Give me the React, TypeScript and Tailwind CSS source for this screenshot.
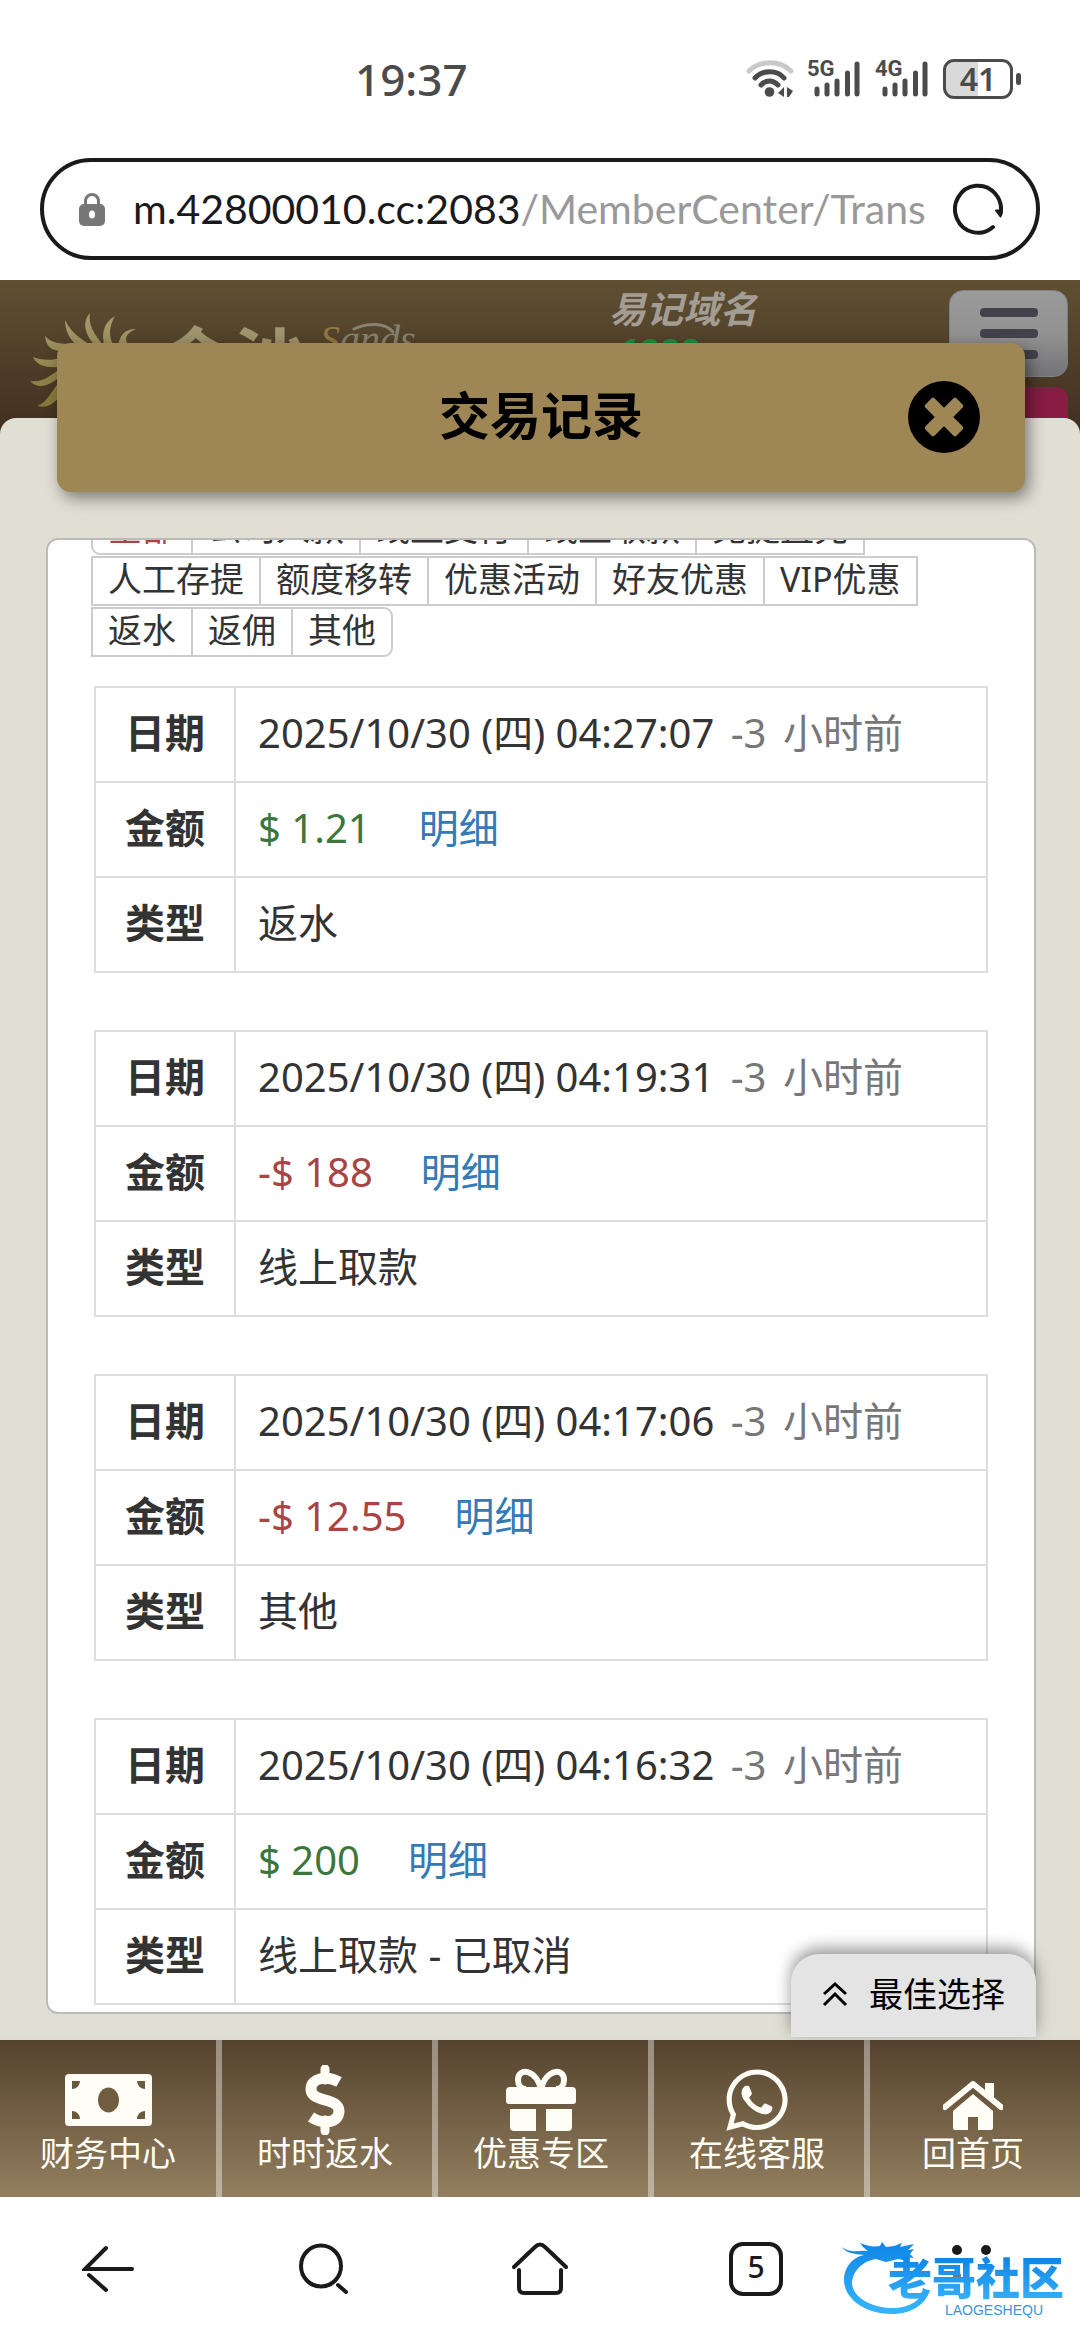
import React from "react";
import { FaWhatsapp } from "react-icons/fa";

type Entry = { time: string; amount: string; income: boolean; kind: string };

const filters = [
  "全部", "公司入款", "线上支付", "线上取款", "免提直充",
  "人工存提", "额度移转", "优惠活动", "好友优惠", "VIP优惠",
  "返水", "返佣", "其他",
];

const entries: Entry[] = [
  { time: "2025/10/30 (四) 04:27:07", amount: "$ 1.21", income: true, kind: "返水" },
  { time: "2025/10/30 (四) 04:19:31", amount: "-$ 188", income: false, kind: "线上取款" },
  { time: "2025/10/30 (四) 04:17:06", amount: "-$ 12.55", income: false, kind: "其他" },
  { time: "2025/10/30 (四) 04:16:32", amount: "$ 200", income: true, kind: "线上取款 - 已取消" },
];

function WifiIcon() {
  return (
    <svg width="48" height="38" viewBox="0 0 48 38" fill="none" strokeLinecap="round">
      <path d="M3 11C14 0 34 0 45 11" stroke="#c9c9c9" strokeWidth="5" />
      <path d="M9 18C17 9.500 31 9.500 38 18" stroke="#4b4b4b" strokeWidth="5" />
      <path d="M15 25C20 19.500 27 19.500 32 25" stroke="#4b4b4b" strokeWidth="5" />
      <circle cx="23.500" cy="32" r="4.800" fill="#4b4b4b" />
      <path d="M38 27v10l-6-4zM41 27l6 4-4 6h-2z" fill="#4b4b4b" />
    </svg>
  );
}

function Signal({ label }: { label: string }) {
  return (
    <div className="relative h-[38px] w-[54px]">
      <span className="absolute -top-px left-0 font-['Roboto',sans-serif] text-[22px] leading-5 font-bold">{label}</span>
      <svg className="absolute bottom-0 left-[7px]" width="47" height="38" viewBox="0 0 47 38" stroke="#4b4b4b" strokeWidth="5" strokeLinecap="round">
        <path d="M3 29v5M13 25v9M23 21v13M33.500 13v21M43 4v30" />
      </svg>
    </div>
  );
}

function StatusBar() {
  return (
    <div className="flex h-[158px] items-start justify-between pt-[59px] pr-[59px] pl-[355px] text-[#4b4b4b]">
      <span className="text-[44px] leading-10 font-medium">19:37</span>
      <div className="flex items-center">
        <WifiIcon />
        <div className="ml-[13px]"><Signal label="5G" /></div>
        <div className="ml-[14px]"><Signal label="4G" /></div>
        <div className="ml-[14px] flex items-center gap-[3px]">
          <span className="flex h-10 w-[70px] items-center justify-center rounded-[11px] border-[3px] border-[#4b4b4b] bg-linear-to-r from-[#d9d9d9] from-50% to-white to-50% text-[32px] leading-8 font-semibold">
            41
          </span>
          <span className="h-3 w-[5px] rounded-sm bg-[#4b4b4b]" />
        </div>
      </div>
    </div>
  );
}

function AddressBar() {
  return (
    <div className="mx-10 mb-5 flex h-[102px] items-center rounded-full border-4 border-[#1a1a1c] pr-[33px] pl-[35px]">
      <svg width="26" height="34" viewBox="0 0 26 34">
        <path d="M6.500 14V9a6.500 6.500 0 0 1 13 0v5" fill="none" stroke="#777" strokeWidth="3" />
        <rect y="12" width="26" height="22" rx="5" fill="#777" />
        <ellipse cx="13" cy="22.500" rx="3" ry="4" fill="#fff" />
      </svg>
      <span className="ml-7 grow font-['Lato','Noto_Sans',sans-serif] text-[41px] leading-[50px] whitespace-nowrap text-[#1a1a1c]">
        m.42800010.cc:2083<span className="text-[#999]">/MemberCenter/Trans</span>
      </span>
      <button aria-label="刷新">
        <svg width="50" height="52" viewBox="0 0 50 52" fill="none" stroke="#1a1a1c" strokeWidth="4" strokeLinecap="round">
          <path d="M40 44A23 23.500 0 1 1 47.500 31" />
          <path d="M43 27.500h6l-1.500 6z" fill="#1a1a1c" strokeWidth="2" strokeLinejoin="round" />
        </svg>
      </button>
    </div>
  );
}

function SunLogo() {
  return (
    <svg width="158" height="138" viewBox="0 0 158 138">
      <defs>
        <linearGradient id="sun" x1="0" y1="30" x2="0" y2="130" gradientUnits="userSpaceOnUse">
          <stop stopColor="#a79c70" />
          <stop offset="1" stopColor="#857637" />
        </linearGradient>
      </defs>
      <g fill="url(#sun)">
        <path d="M90 33C82 42 84 54 97 68L104 66C94 54 88 45 90 33Z" />
        <path d="M65 40C65 52 70 60 80 68L92 66C80 58 72 54 65 40Z" />
        <path d="M115 36C103 43 101 54 105 68L114 66C108 56 109 47 115 36Z" />
        <path d="M136 49C124 49 119 56 118 68L127 63C124 56 129 52 136 49Z" />
        <path d="M45 56C46 66 51 71 62 71L72 64C60 64 51 63 45 56Z" />
        <path d="M33 77C37 86 46 88 62 87V78C50 81 41 80 33 77Z" />
        <path d="M30 101C38 110 50 106 62 95V88C50 95 44 103 30 101Z" />
        <path d="M37 126C48 129 56 123 62 112V98C52 110 48 122 37 126Z" />
      </g>
      <circle cx="98" cy="104" r="38" fill="#8f8144" />
    </svg>
  );
}

function SiteHeader() {
  return (
    <header className="flex h-[154px] items-start justify-between overflow-hidden bg-linear-to-b from-[#5f5033] to-[#402f1f]">
      <div className="flex items-start">
        <SunLogo />
        <span className="mt-[42px] bg-linear-to-b from-[#a29873] to-[#8b7e4a] bg-clip-text text-[75px] leading-[78px] font-bold text-transparent">金沙</span>
        <div className="relative mt-10 ml-3 font-['Liberation_Serif',serif] text-[40px] leading-10 text-[#87826f] italic">
          <span className="text-[#94773f]">S</span>ands
          <svg className="absolute top-0 left-8" width="50" height="14" viewBox="0 0 50 14" fill="none">
            <path d="M2 9C16 2 34 3 41 12" stroke="#87826f" strokeWidth="3" strokeLinecap="round" />
          </svg>
        </div>
      </div>
      <div className="flex items-start">
        <div className="mr-[192px] font-bold italic">
          <p className="mt-2 text-[37px] leading-[42px] text-[#a39d94]">易记域名</p>
          <p className="mt-px pl-2 text-[37px] leading-[42px] text-[#1b8c3e]">1888</p>
        </div>
        <div className="mr-3 flex flex-col items-end">
          <button aria-label="菜单" className="mt-2.5 flex h-[87px] w-[119px] flex-col items-center justify-center gap-3 rounded-[14px] border border-[#7d7f86] bg-linear-to-b from-[#9a9a9a] via-[#929292] to-[#747477]">
            <span className="h-[9px] w-[58px] rounded-sm bg-[#43414b]" />
            <span className="h-[9px] w-[58px] rounded-sm bg-[#43414b]" />
            <span className="h-[9px] w-[58px] rounded-sm bg-[#43414b]" />
          </button>
          <span className="mt-[10px] h-14 w-24 rounded-[12px] bg-[#881c43]" />
        </div>
      </div>
    </header>
  );
}

function TitleBar() {
  return (
    <div className="relative z-10 mr-[55px] -mt-[75px] ml-[57px] grid h-[149px] grid-cols-[1fr_auto_1fr] items-center rounded-[14px] bg-[#9e8655] shadow-[4px_6px_16px_rgba(0,0,0,0.45)]">
      <h1 className="col-start-2 pb-1.5 text-[51px] leading-[60px] font-bold text-black">交易记录</h1>
      <button aria-label="关闭" className="mr-[45px] justify-self-end">
        <svg width="72" height="74" viewBox="0 0 72 74">
          <circle cx="36" cy="36" r="36" />
          <g fill="#9e8655" transform="rotate(45 36 36)">
            <rect x="14" y="29.500" width="44" height="13" rx="2" />
            <rect x="29.500" y="14" width="13" height="44" rx="2" />
          </g>
        </svg>
      </button>
    </div>
  );
}

const thClass = "w-[140px] border-2 border-[#ddd] pb-1 text-center font-bold";
const tdClass = "border-2 border-[#ddd] pb-1 pl-[22px]";

function EntryTable({ entry }: { entry: Entry }) {
  return (
    <table className="w-full border-collapse text-[40px] leading-[48px] text-[#333]">
      <tbody>
        <tr className="h-[95px]">
          <th scope="row" className={thClass}>日期</th>
          <td className={tdClass}>
            {entry.time} <span className="ml-1.5 text-[#777]">-3 <span className="ml-1.5">小时前</span></span>
          </td>
        </tr>
        <tr className="h-[95px]">
          <th scope="row" className={thClass}>金额</th>
          <td className={tdClass}>
            <span className={entry.income ? "text-[#3c763d]" : "text-[#a94442]"}>{entry.amount}</span>
            <a href="#detail" className="ml-12 text-[#337ab7]">明细</a>
          </td>
        </tr>
        <tr className="h-[95px]">
          <th scope="row" className={thClass}>类型</th>
          <td className={tdClass}>{entry.kind}</td>
        </tr>
      </tbody>
    </table>
  );
}

function Records() {
  return (
    <section className="mt-[46px] mr-11 mb-[23px] ml-[46px] grow overflow-hidden rounded-[12px] border-2 border-[#bbb] bg-white pb-1">
      <div className="-mt-[35px] mr-[46px] ml-[45px] flex flex-wrap gap-y-px">
        {filters.map((name, i) => (
          <button
            key={name}
            className={
              "-ml-[2px] h-[50px] border-2 border-[#ccc] px-[15px] pb-1 text-[34px] leading-[42px] " +
              (i === 0 ? "rounded-l-[9px] text-[#a94442]" : i === filters.length - 1 ? "rounded-r-[9px] text-[#333]" : "text-[#333]")
            }
          >
            {name}
          </button>
        ))}
      </div>
      <div className="mx-[46px] mt-[29px] flex flex-col gap-[57px]">
        {entries.map((e) => (
          <EntryTable key={e.time} entry={e} />
        ))}
      </div>
    </section>
  );
}

const navItems = [
  {
    label: "财务中心",
    icon: (
      <svg width="87" height="70" viewBox="0 0 87 70">
        <rect y="9" width="87" height="52" rx="4" fill="#fffdf5" />
        <ellipse cx="43.500" cy="35" rx="10.500" ry="12.500" fill="#705d41" />
        <path d="M7 16h8a8 8 0 0 1-8 8zM80 16h-8a8 8 0 0 0 8 8zM7 54h8a8 8 0 0 0-8-8zM80 54h-8a8 8 0 0 1 8-8z" fill="#6b593e" />
      </svg>
    ),
  },
  {
    label: "时时返水",
    icon: (
      <svg width="40" height="70" viewBox="0 0 40 70" fill="none" stroke="#fffdf5">
        <path d="M20 4v11M20 55v11" strokeWidth="9" strokeLinecap="round" />
        <path d="M34 17C22 10 6 13 6 24C6 38 34 32 34 46C34 58 18 60 6 52" strokeWidth="11" />
      </svg>
    ),
  },
  {
    label: "优惠专区",
    icon: (
      <svg width="70" height="70" viewBox="0 0 70 70" fill="#fffdf5">
        <path d="M0 26q0-4 4-4h62q4 0 4 4v10q0 3-3 3H3q-3 0-3-3zM4 44h26v22H8q-4 0-4-4zM40 44h26v18q0 4-4 4H40z" />
        <path d="M35 24C30 4 12 2 12 15C12 20 15 24 20 24M35 24C40 4 58 2 58 15C58 20 55 24 50 24" fill="none" stroke="#fffdf5" strokeWidth="6" />
      </svg>
    ),
  },
  { label: "在线客服", icon: <FaWhatsapp size={70} color="#fffdf5" /> },
  {
    label: "回首页",
    icon: (
      <svg width="60" height="70" viewBox="0 0 60 70" fill="#fffdf5">
        <path d="M2 42L30 19L58 42" fill="none" stroke="#fffdf5" strokeWidth="6" strokeLinecap="round" strokeLinejoin="round" />
        <path d="M42 18h9v16l-9-8zM30 29L50 46v17q0 2-2 2H35V52H25v13H12q-2 0-2-2V46z" />
      </svg>
    ),
  },
];

function SiteNav() {
  return (
    <nav className="grid h-[160px] grid-cols-5 border-t-[3px] border-[#dddcd5] bg-linear-to-b from-[#55432e] to-[#938060]">
      {navItems.map((item, i) => (
        <a
          key={item.label}
          href="#nav"
          className={
            "flex flex-col items-center pt-[25px] text-[34px] leading-[36px] text-[#fffdf5] " +
            (i > 0 ? "border-l-[6px] border-white/40 pr-1" : "")
          }
        >
          {item.icon}
          {item.label}
        </a>
      ))}
    </nav>
  );
}

function Watermark() {
  return (
    <div className="pointer-events-none absolute right-4 bottom-6 h-[74px] w-[222px]">
      <svg className="absolute inset-0" width="222" height="74" viewBox="0 0 222 74">
        <defs>
          <linearGradient id="dragon" x1="0" y1="0" x2="0" y2="1">
            <stop stopColor="#0f86e6" />
            <stop offset="1" stopColor="#35b6fb" />
          </linearGradient>
        </defs>
        <path
          d="M0 5C10 12 16 8 26 9C20 5 20 3 18 1C26 4 30 5 38 4L40 0L44 5L52 4L60 1L58 5L72 2L66 8L72 7L68 12L72 16L62 15L66 19L56 17L44 20L34 17C20 19 10 30 10 42C12 58 34 67 54 66C68 65 78 58 84 48H88C84 62 70 72 50 72C22 72 2 56 2 38C2 24 12 15 22 13C12 12 4 11 0 5Z"
          fill="url(#dragon)"
        />
      </svg>
      <span className="absolute top-[13px] right-0 bg-linear-to-b from-[#0d83e4] to-[#35b0f8] bg-clip-text text-[44px] leading-[46px] font-black whitespace-nowrap text-transparent">
        老哥社区
      </span>
      <span className="absolute right-[21px] bottom-0 font-['Liberation_Sans',sans-serif] text-[14px] leading-3 text-[#3a94d8]">
        LAOGESHEQU
      </span>
    </div>
  );
}

function BrowserBar() {
  return (
    <div className="relative grid h-[143px] grid-cols-5 items-center justify-items-center bg-white text-[#1a1a1c]">
      <button aria-label="后退">
        <svg width="52" height="48" viewBox="0 0 52 48" fill="none" stroke="currentColor" strokeWidth="4" strokeLinecap="round">
          <path d="M24 3L3 24H50M7 30L24 45" />
        </svg>
      </button>
      <button aria-label="搜索">
        <svg width="50" height="52" viewBox="0 0 50 52" fill="none" stroke="currentColor" strokeWidth="4" strokeLinecap="round">
          <ellipse cx="22" cy="23" rx="20" ry="20.500" />
          <path d="M39 42L47 49" />
        </svg>
      </button>
      <button aria-label="主页">
        <svg width="56" height="54" viewBox="0 0 56 54" fill="none" stroke="currentColor" strokeWidth="4" strokeLinecap="round" strokeLinejoin="round">
          <path d="M2 25L23 5Q28 0 33 5L54 25M7 28V46Q7 51 12 51H44Q49 51 49 46V28" />
        </svg>
      </button>
      <button aria-label="标签页" className="flex h-[54px] w-[54px] items-center justify-center rounded-[14px] border-4 border-[#1a1a1c] pb-1 text-[30px] leading-8 font-medium">
        5
      </button>
      <button aria-label="更多" className="pb-4">
        <svg width="40" height="40" viewBox="0 0 40 40" fill="currentColor">
          <circle cx="5" cy="9" r="5" />
          <circle cx="34" cy="9" r="5" />
          <circle cx="5" cy="35" r="4" opacity="0.6" />
          <circle cx="34" cy="35" r="4" opacity="0.08" />
        </svg>
      </button>
      <Watermark />
    </div>
  );
}

export default function App() {
  return (
    <div className="flex min-h-screen flex-col bg-white font-['Noto_Sans','Noto_Sans_CJK_SC',sans-serif]">
      <StatusBar />
      <AddressBar />
      <SiteHeader />
      <main className="relative -mt-4 flex grow flex-col rounded-t-[16px] bg-[#e1dfd4]">
        <TitleBar />
        <Records />
        <button className="absolute right-11 bottom-0 flex h-[83px] w-[245px] items-center justify-center gap-[21px] rounded-t-[28px] bg-[#e4e4e4] pb-1 text-[34px] leading-10 text-black shadow-[0_-6px_16px_rgba(0,0,0,0.4)]">
          <svg width="26" height="26" viewBox="0 0 26 26" fill="none" stroke="#000" strokeWidth="3">
            <path d="M2 13L13 3L24 13M2 24L13 13L24 24" />
          </svg>
          最佳选择
        </button>
      </main>
      <SiteNav />
      <BrowserBar />
    </div>
  );
}
